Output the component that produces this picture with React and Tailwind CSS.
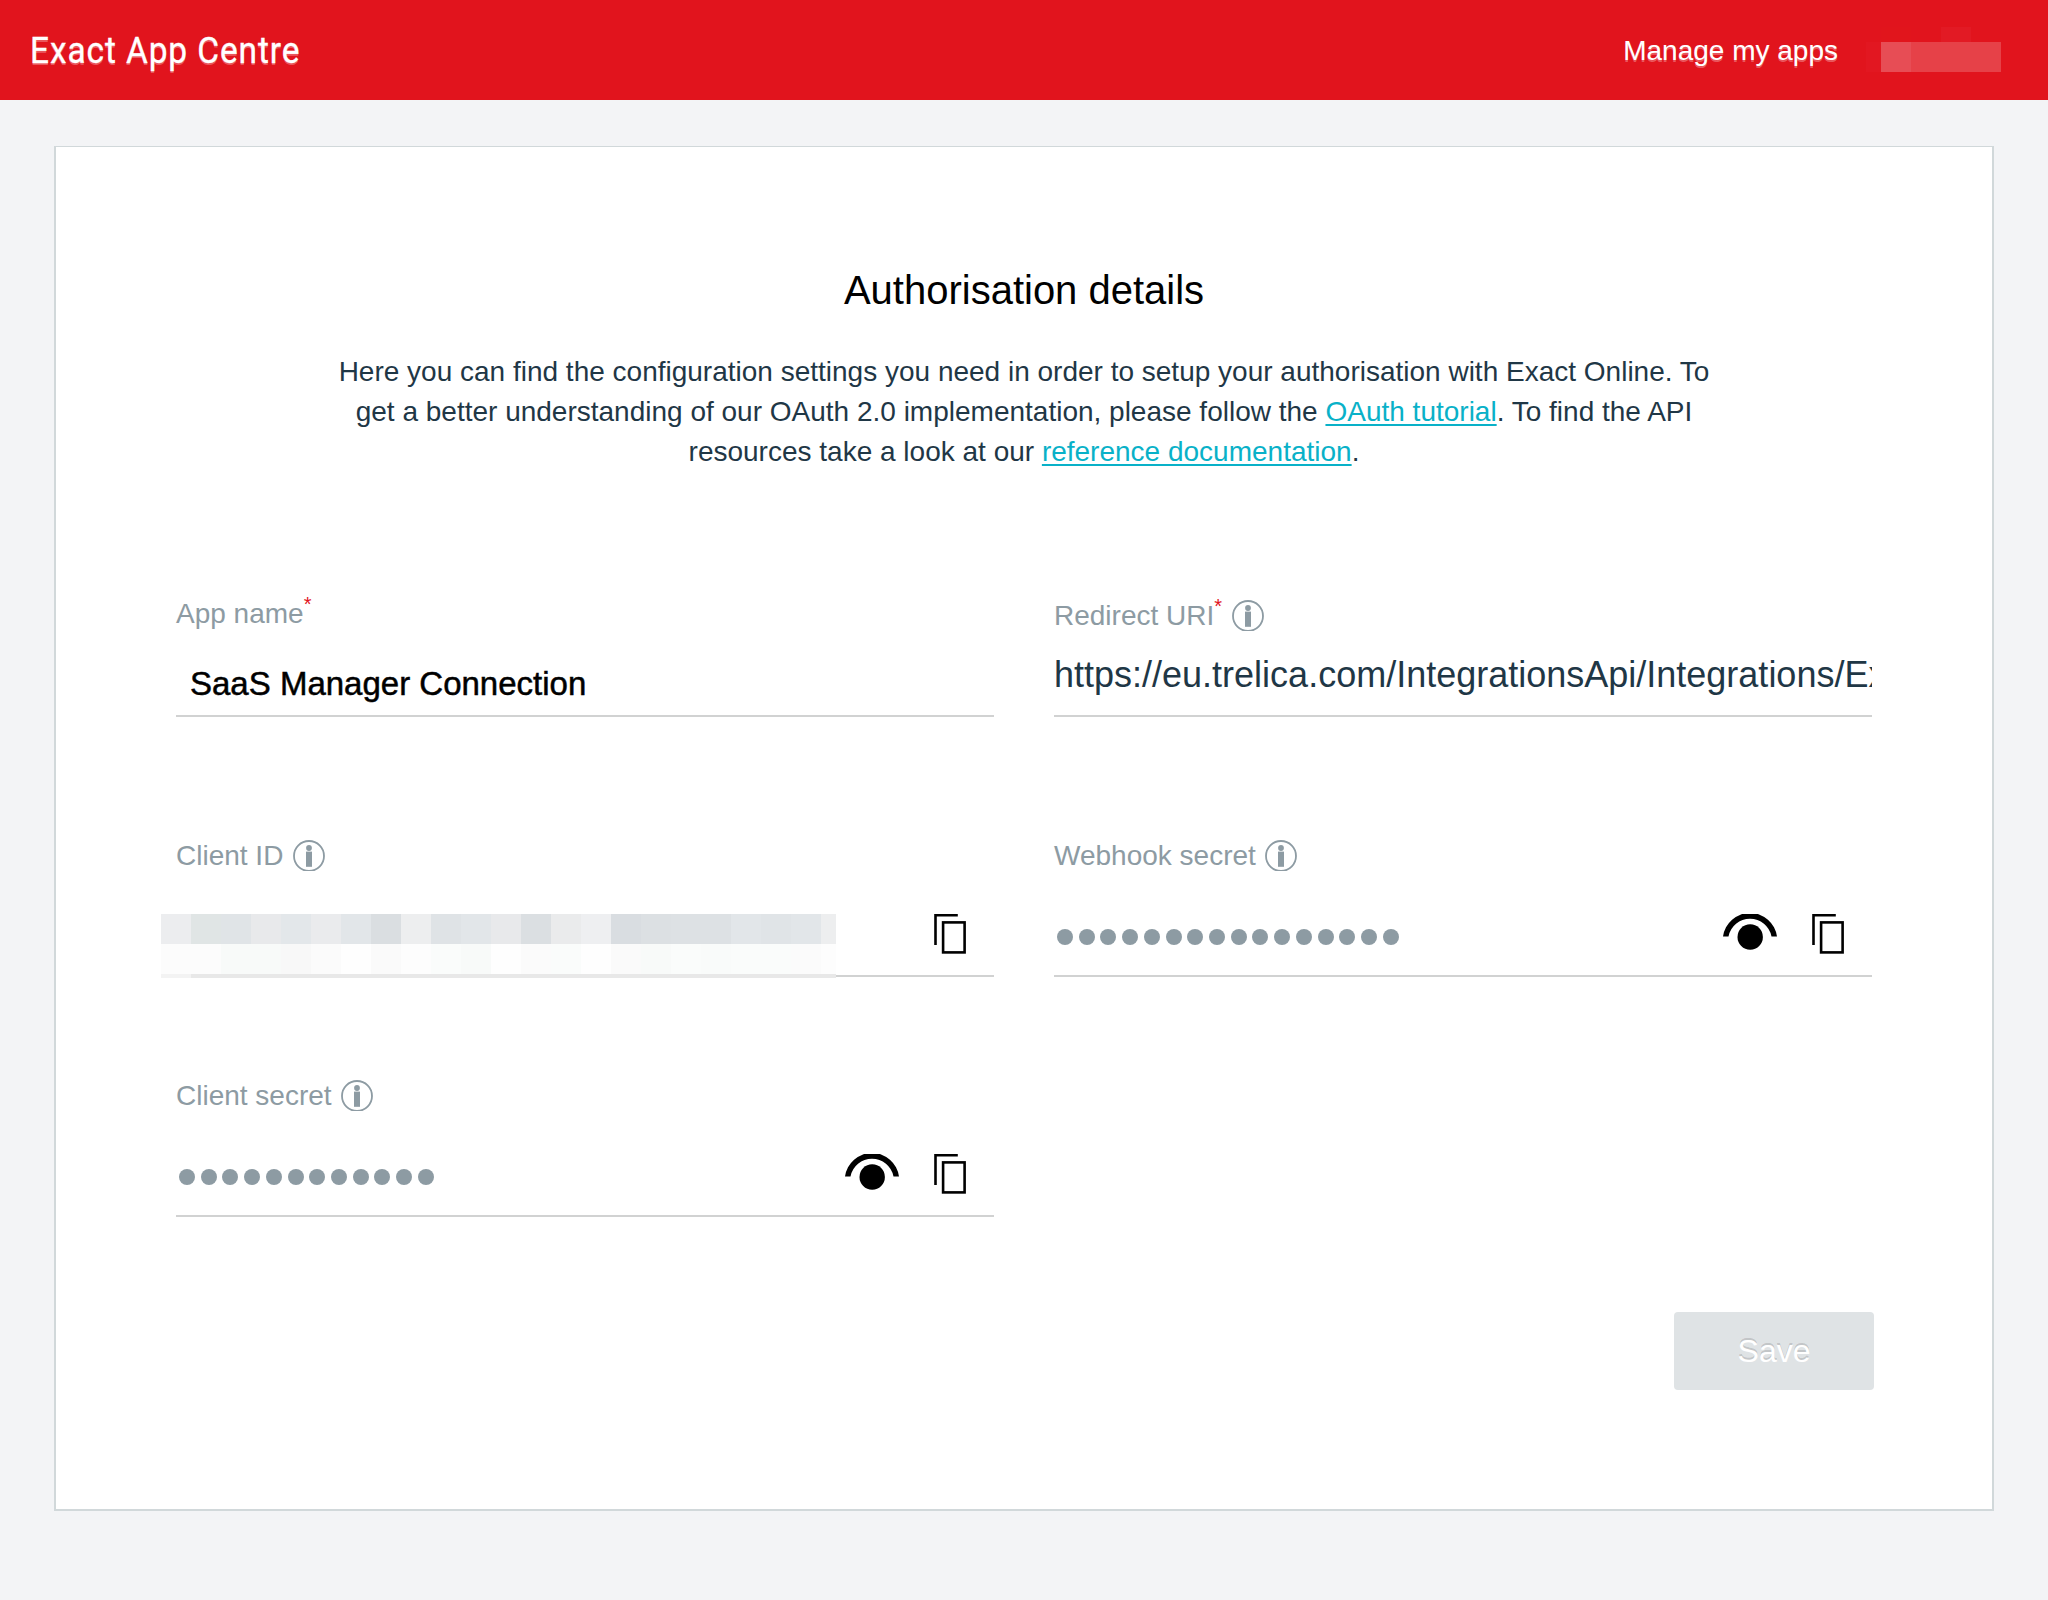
const ROW_A = ['#ecedef', '#e0e5e5', '#e0e4e7', '#e8e9eb', '#e3e7ea', '#eaebed', '#e2e6e9', '#dadee1', '#edeeef', '#dfe3e6', '#e2e6e9', '#e8e9eb', '#dbdfe2', '#eaebec', '#eeeff1', '#d9dde1', '#dce0e3', '#dde1e4', '#dde1e4', '#e2e6e9', '#e0e4e7', '#e2e6e9', '#edeeef'];
const ROW_B = ['#fcfcfc', '#fcfcfc', '#f8faf9', '#f8faf9', '#f8f8f8', '#fbfbfb', '#fefefe', '#fafafa', '#fdfdfd', '#fafcfb', '#f8faf9', '#fefefe', '#fbfbfb', '#fafcfb', '#fefefe', '#fafafa', '#f8faf9', '#fafcfb', '#f9fbfa', '#fafcfb', '#fafcfb', '#fbfbfb', '#fdfdfd'];

function InfoIcon() {
  return (
    <svg className="ml-[9.5px] mt-1 h-[31px] w-8 shrink-0" viewBox="0 0 32 31" fill="none">
      <circle cx="16" cy="16" r="15" stroke="#8d9ba3" strokeWidth="1.8" />
      <circle cx="16" cy="8" r="2.9" fill="#8d9ba3" />
      <rect x="13" y="11.6" width="6" height="15.2" fill="#8d9ba3" />
    </svg>
  );
}

function CopyIcon() {
  return (
    <svg className="h-10 w-8 shrink-0" viewBox="0 0 32 40" fill="none" stroke="#000" strokeWidth="2.6">
      <path d="M1.5 31V1.3H23.8" />
      <rect x="9.1" y="8.4" width="21.5" height="30" />
    </svg>
  );
}

function EyeIcon() {
  return (
    <svg className="h-9 w-[54px] shrink-0" viewBox="0 0 54 36" fill="#000">
      <path d="M0 22.5A27.25 27.25 0 0 1 54 22.5H48.5A21.9 21.9 0 0 0 5.5 22.5Z" />
      <circle cx="27.2" cy="23" r="12.7" />
    </svg>
  );
}

function Dots({ count }) {
  return (
    <div className="ml-[3px] mt-[15px] flex gap-[5.72px]">
      {Array.from({ length: count }, (_, i) => (
        <span key={i} className="size-4 rounded-full bg-[#8d9ba3]" />
      ))}
    </div>
  );
}

function Label({ text, required, info, className = '' }) {
  return (
    <div className={`flex h-10 items-start text-[28px] leading-10 text-[#8d9ba3] ${className}`}>
      <span>{text}</span>
      {required && <span className="mr-px w-[7px] text-[20px] leading-[20px] text-[#e1141d]">*</span>}
      {info && <InfoIcon />}
    </div>
  );
}

function CellRow({ colors, className }) {
  return (
    <div className={`flex ${className}`}>
      {colors.map((c, i) => (
        <span key={i} className="h-full w-[30px] shrink-0" style={{ backgroundColor: c }} />
      ))}
    </div>
  );
}

function Redacted() {
  return (
    <div className="-ml-[15px] h-16 w-[675px] overflow-hidden">
      <CellRow colors={ROW_A} className="h-[30px]" />
      <CellRow colors={ROW_B} className="h-[30px]" />
      <div className="flex h-1">
        <span className="w-[30px] bg-[#f3f3f3]" />
        <span className="flex-1 bg-[#e8e8e8]" />
      </div>
    </div>
  );
}

function SecretField({ label, children, eye }) {
  return (
    <div>
      <Label text={label} info />
      <div className="flex h-[101px] items-start justify-between border-b-2 border-[#d1d2d2] pr-7 pt-[38px]">
        {children}
        <div className="flex gap-[35px]">
          {eye && <EyeIcon />}
          <CopyIcon />
        </div>
      </div>
    </div>
  );
}

export default function App() {
  return (
    <div className="flex h-[1600px] w-[2048px] flex-col overflow-hidden bg-[#f3f4f6] font-['Liberation_Sans',Arial,sans-serif]">
      <header className="flex h-[100px] shrink-0 items-start bg-[#e1141d] pl-[30px] text-white">
        <h1 className="mt-[27px] origin-left scale-x-[0.93] font-['Roboto',sans-serif] text-[36px] leading-[48px] tracking-[0.95px] [-webkit-text-stroke:0.3px_#fff] [text-shadow:0_2px_0_rgba(255,255,255,0.3)]">
          Exact App Centre
        </h1>
        <nav className="ml-auto mt-[31px] text-[28px] leading-10 [text-shadow:0_2px_0_rgba(255,255,255,0.3)]">
          Manage my apps
        </nav>
        <div className="ml-7 mr-[47px] mt-[27px] w-[135px]">
          <div className="flex h-[15px] pl-[15px]">
            <span className="w-[30px] bg-[#e1151c]" />
            <span className="ml-[30px] w-[30px] bg-[#e21a24]" />
          </div>
          <div className="flex h-[30px]">
            <span className="w-[15px] bg-[#e21721]" />
            <span className="w-[30px] bg-[#e74d55]" />
            <span className="w-[90px] bg-[#e64148]" />
          </div>
        </div>
      </header>

      <main className="mx-[54px] mt-[46px] h-[1365px] border-2 border-t border-[#d1d8da] bg-white px-[120px] pt-[119px]">
        <h2 className="text-center text-[40px] leading-[48px] text-black">Authorisation details</h2>
        <p className="mt-[38px] text-center text-[28px] leading-10 text-[#1f3746]">
          Here you can find the configuration settings you need in order to setup your authorisation with Exact Online. To
          <br />
          get a better understanding of our OAuth 2.0 implementation, please follow the{' '}
          <a className="text-[#09b1c8] underline decoration-[1.6px] underline-offset-[3px]">OAuth tutorial</a>. To find the API
          <br />
          resources take a look at our{' '}
          <a className="text-[#09b1c8] underline decoration-[1.6px] underline-offset-[3px]">reference documentation</a>.
        </p>

        <div className="mt-[124px] grid w-[1696px] grid-cols-2 grid-rows-[240px_240px_141px] gap-x-[60px]">
          <div>
            <Label text="App name" required className="-mt-0.5 mb-0.5" />
            <div className="h-[81px] border-b-2 border-[#d1d2d2] pl-[14px] pt-[28px] text-[33px] leading-10 text-black [-webkit-text-stroke:0.5px_#000]">
              SaaS Manager Connection
            </div>
          </div>
          <div>
            <Label text="Redirect URI" required info />
            <div className="h-[81px] overflow-hidden whitespace-nowrap border-b-2 border-[#d1d2d2] pt-[19px] text-[36px] leading-10 text-[#1f3746]">
              https://eu.trelica.com/IntegrationsApi/Integrations/Ex
            </div>
          </div>
          <SecretField label="Client ID">
            <Redacted />
          </SecretField>
          <SecretField label="Webhook secret" eye>
            <Dots count={16} />
          </SecretField>
          <SecretField label="Client secret" eye>
            <Dots count={12} />
          </SecretField>
        </div>

        <div className="-mr-0.5 mt-[95px] flex justify-end">
          <button className="h-[78px] w-[200px] rounded bg-[#dfe3e5] text-[32px] leading-10 text-white [text-shadow:0_-2px_0_rgba(0,0,0,0.15)]">
            Save
          </button>
        </div>
      </main>
    </div>
  );
}
